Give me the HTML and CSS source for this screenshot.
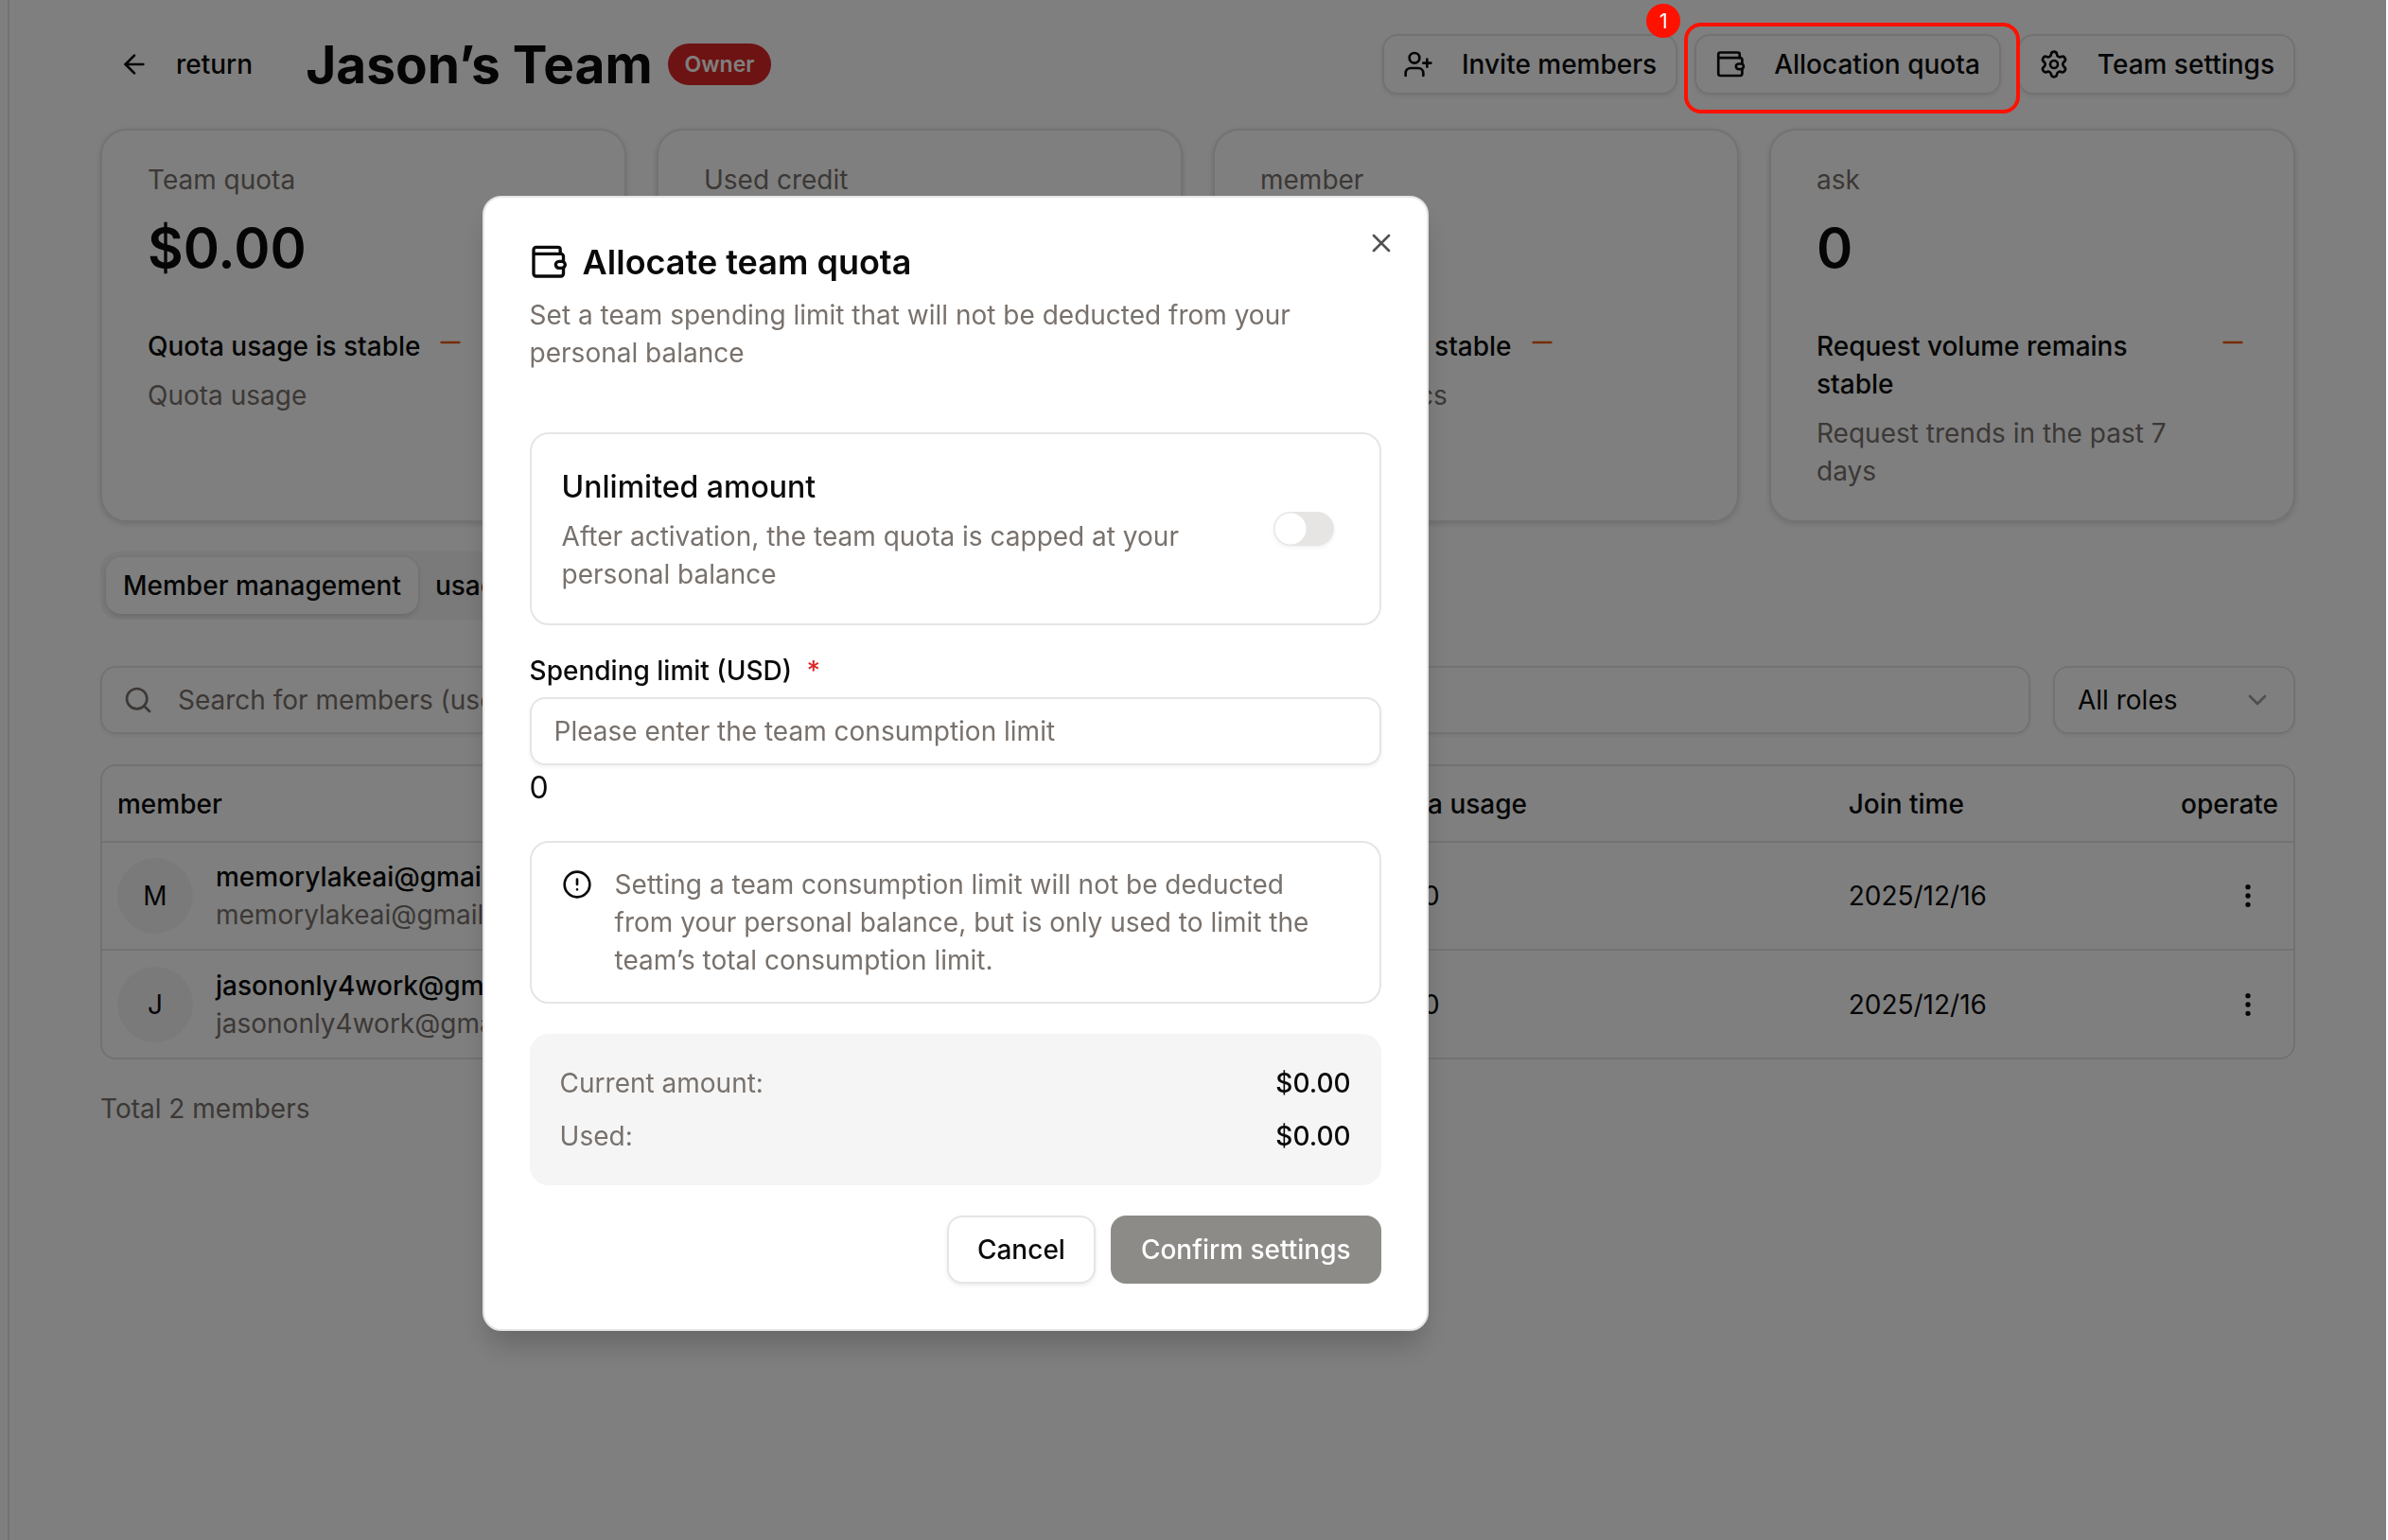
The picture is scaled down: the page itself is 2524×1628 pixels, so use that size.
FILE: index.html
```html
<!DOCTYPE html>
<html lang="en">
<head>
    <meta charset="UTF-8">
    <meta name="viewport" content="width=device-width, initial-scale=1.0">
    <title>Jason’s Team</title>
    <link rel="stylesheet" href="styles.css">
</head>
<body>

    <!-- shared icons -->
    <svg class="sprite" aria-hidden="true">
        <symbol id="icon-wallet" viewBox="0 0 24 24">
            <path d="M19.3 6.8V4a1.4 1.4 0 0 0-1.4-1.4H4A1.6 1.6 0 0 0 2.4 4.2v15.2A1.6 1.6 0 0 0 4 21h15.7a1.6 1.6 0 0 0 1.6-1.6V16"/>
            <path d="M2.6 6.8h17.1a1.6 1.6 0 0 1 1.6 1.6v3"/>
            <rect x="16.4" y="11.6" width="6" height="4.2" rx="2.1"/>
        </symbol>
        <symbol id="icon-dots" viewBox="0 0 24 24">
            <circle cx="12" cy="12" r="1"/><circle cx="12" cy="5" r="1"/><circle cx="12" cy="19" r="1"/>
        </symbol>
        <symbol id="icon-minus" viewBox="0 0 24 24">
            <path d="M5 12h14"/>
        </symbol>
    </svg>

    <div class="page">
        <main class="content">
            <header class="header">
                <a class="back" href="#">
                    <svg class="icon" viewBox="0 0 24 24"><path d="m12 19-7-7 7-7"/><path d="M19 12H5"/></svg>
                    return
                </a>
                <h1>Jason’s Team</h1>
                <span class="badge">Owner</span>
                <div class="actions">
                    <button class="btn btn-small">
                        <svg class="icon" viewBox="0 0 24 24"><path d="M16 21v-2a4 4 0 0 0-4-4H6a4 4 0 0 0-4 4v2"/><circle cx="9" cy="7" r="4"/><path d="M19 8v6M22 11h-6"/></svg>
                        Invite members
                    </button>
                    <div class="marked">
                        <button class="btn btn-small">
                            <svg class="icon"><use href="#icon-wallet"/></svg>
                            Allocation quota
                        </button>
                        <div class="marker"><span class="marker-number">1</span></div>
                    </div>
                    <button class="btn btn-small">
                        <svg class="icon" viewBox="0 0 24 24"><path d="M9.671 4.136a2.34 2.34 0 0 1 4.659 0 2.34 2.34 0 0 0 3.319 1.915 2.34 2.34 0 0 1 2.33 4.033 2.34 2.34 0 0 0 0 3.831 2.34 2.34 0 0 1-2.33 4.033 2.34 2.34 0 0 0-3.319 1.915 2.34 2.34 0 0 1-4.659 0 2.34 2.34 0 0 0-3.32-1.915 2.34 2.34 0 0 1-2.33-4.033 2.34 2.34 0 0 0 0-3.831A2.34 2.34 0 0 1 6.35 6.051a2.34 2.34 0 0 0 3.319-1.915"/><circle cx="12" cy="12" r="3"/></svg>
                        Team settings
                    </button>
                </div>
            </header>

            <section class="cards">
                <div class="card">
                    <p class="muted">Team quota</p>
                    <p class="value">$0.00</p>
                    <div class="trend"><span>Quota usage is stable</span><svg class="icon trend-icon"><use href="#icon-minus"/></svg></div>
                    <p class="muted note">Quota usage</p>
                </div>
                <div class="card">
                    <p class="muted">Used credit</p>
                    <p class="value">$0.00</p>
                    <div class="trend"><span>Usage is stable</span><svg class="icon trend-icon"><use href="#icon-minus"/></svg></div>
                    <p class="muted note">Used credit</p>
                </div>
                <div class="card">
                    <p class="muted">member</p>
                    <p class="value">2</p>
                    <div class="trend"><span>Members are stable</span><svg class="icon trend-icon"><use href="#icon-minus"/></svg></div>
                    <p class="muted note">Team statistics</p>
                </div>
                <div class="card">
                    <p class="muted">ask</p>
                    <p class="value">0</p>
                    <div class="trend"><span>Request volume remains stable</span><svg class="icon trend-icon"><use href="#icon-minus"/></svg></div>
                    <p class="muted note">Request trends in the past 7 days</p>
                </div>
            </section>

            <nav class="tabs">
                <button class="tab active">Member management</button>
                <button class="tab">usage</button>
            </nav>

            <div class="filters">
                <label class="search">
                    <svg class="icon" viewBox="0 0 24 24"><circle cx="11" cy="11" r="8"/><path d="m21 21-4.3-4.3"/></svg>
                    <input type="text" placeholder="Search for members (username)" aria-label="Search for members">
                </label>
                <div class="select">
                    <select aria-label="Role">
                        <option>All roles</option>
                    </select>
                    <svg class="icon" viewBox="0 0 24 24"><path d="m6 9 6 6 6-6"/></svg>
                </div>
            </div>

            <div class="table-wrap">
                <table>
                    <thead>
                        <tr>
                            <th class="col-member">member</th>
                            <th>Quota usage</th>
                            <th class="col-time">Join time</th>
                            <th class="col-operate">operate</th>
                        </tr>
                    </thead>
                    <tbody>
                        <tr>
                            <td>
                                <div class="member">
                                    <span class="avatar">M</span>
                                    <div><strong>memorylakeai@gmail.com</strong><p class="muted">memorylakeai@gmail.com</p></div>
                                </div>
                            </td>
                            <td>$0.00</td>
                            <td>2025/12/16</td>
                            <td class="col-operate"><button class="more" aria-label="More"><svg class="icon"><use href="#icon-dots"/></svg></button></td>
                        </tr>
                        <tr>
                            <td>
                                <div class="member">
                                    <span class="avatar">J</span>
                                    <div><strong>jasononly4work@gmail.com</strong><p class="muted">jasononly4work@gmail.com</p></div>
                                </div>
                            </td>
                            <td>$0.00</td>
                            <td>2025/12/16</td>
                            <td class="col-operate"><button class="more" aria-label="More"><svg class="icon"><use href="#icon-dots"/></svg></button></td>
                        </tr>
                    </tbody>
                </table>
            </div>

            <p class="muted">Total 2 members</p>
        </main>
    </div>

    <div class="overlay">
        <div class="modal" role="dialog" aria-labelledby="modal-title">
            <button class="close" aria-label="Close">
                <svg class="icon" viewBox="0 0 24 24"><path d="M18 6 6 18M6 6l12 12"/></svg>
            </button>
            <div class="modal-head">
                <h2 id="modal-title"><svg class="icon"><use href="#icon-wallet"/></svg>Allocate team quota</h2>
                <p class="muted">Set a team spending limit that will not be deducted from your personal balance</p>
            </div>

            <div class="box unlimited">
                <div>
                    <label class="box-title" for="unlimited">Unlimited amount</label>
                    <p class="muted">After activation, the team quota is capped at your personal balance</p>
                </div>
                <input class="switch" type="checkbox" id="unlimited">
            </div>

            <div class="field">
                <label for="limit">Spending limit (USD) <span class="required">*</span></label>
                <input type="text" id="limit" placeholder="Please enter the team consumption limit">
                <p class="amount">0</p>
            </div>

            <div class="box notice">
                <svg class="icon" viewBox="0 0 24 24"><circle cx="12" cy="12" r="10"/><path d="M12 8v4M12 16h.01"/></svg>
                <p class="muted">Setting a team consumption limit will not be deducted from your personal balance, but is only used to limit the team’s total consumption limit.</p>
            </div>

            <dl class="summary">
                <div><dt>Current amount:</dt><dd>$0.00</dd></div>
                <div><dt>Used:</dt><dd>$0.00</dd></div>
            </dl>

            <div class="modal-foot">
                <button class="btn">Cancel</button>
                <button class="btn btn-primary" disabled>Confirm settings</button>
            </div>
        </div>
    </div>

</body>
</html>
```

FILE: styles.css
```css
* {
    box-sizing: border-box;
    margin: 0;
    padding: 0;
}
body {
    font-family: Inter, "Liberation Sans", sans-serif;
    font-size: 28px;
    line-height: 40px;
    color: #0a0a0a;
    background: #fff;
}
button, input, select {
    font: inherit;
    color: inherit;
    background: none;
    border: none;
}
a {
    color: inherit;
    text-decoration: none;
}
.sprite {
    position: absolute;
    width: 0;
    height: 0;
}
.icon {
    width: 32px;
    height: 32px;
    flex-shrink: 0;
    fill: none;
    stroke: currentColor;
    stroke-width: 2;
    stroke-linecap: round;
    stroke-linejoin: round;
}
.muted {
    color: #78716c;
}

/* page */
.page {
    min-height: 100vh;
    padding-left: 8px;
}
.content {
    min-height: 100vh;
    padding: 36px 98px 36px 96px;
    background: #fff;
    border-left: 2px solid #e5e5e5;
}
.header {
    display: flex;
    align-items: center;
    gap: 16px;
    height: 64px;
    margin-bottom: 36px;
}
.back {
    display: flex;
    align-items: center;
    gap: 28px;
    padding: 0 40px 0 20px;
    font-weight: 500;
}
h1 {
    font-size: 55px;
    line-height: 64px;
    font-weight: 700;
}
.badge {
    padding: 2px 18px;
    border-radius: 22px;
    font-size: 23px;
    font-weight: 600;
    color: #fff;
    background: #dc2626;
}
.actions {
    display: flex;
    gap: 18px;
    margin-left: auto;
}
.btn {
    display: flex;
    align-items: center;
    height: 72px;
    padding: 0 30px;
    border: 2px solid #e5e5e5;
    border-radius: 16px;
    font-weight: 500;
    background: #fff;
    box-shadow: 0 2px 4px rgba(0, 0, 0, 0.08);
}
.btn-small {
    height: 64px;
    gap: 30px;
    padding: 0 20px;
}
.btn-primary {
    color: #fff;
    background: #8c8b88;
    border-color: #8c8b88;
    box-shadow: none;
}

/* red frame over the quota button */
.marked {
    position: relative;
}
.marker {
    position: absolute;
    inset: -12px -20px -20px -11px;
    z-index: 20;
    border: 4px solid #ff1100;
    border-radius: 18px;
}
.marker-number {
    position: absolute;
    top: -24px;
    left: -44px;
    width: 36px;
    height: 36px;
    border-radius: 50%;
    font-size: 22px;
    line-height: 36px;
    text-align: center;
    color: #fff;
    background: #ff1100;
}

/* cards */
.cards {
    display: grid;
    grid-template-columns: repeat(4, 1fr);
    gap: 32px;
    margin-bottom: 31px;
}
.card {
    min-height: 416px;
    padding: 32px 48px;
    border: 2px solid #e5e5e5;
    border-radius: 28px;
    box-shadow: 0 2px 6px rgba(0, 0, 0, 0.15);
}
.value {
    margin-bottom: 32px;
    font-size: 58px;
    line-height: 104px;
    font-weight: 600;
}
.trend {
    display: flex;
    gap: 16px;
    margin-bottom: 12px;
    font-weight: 500;
}
.trend-icon {
    color: #ea580c;
}
.note {
    padding-right: 32px;
}

/* tabs and filters */
.tabs {
    display: inline-flex;
    align-items: center;
    height: 72px;
    padding: 6px;
    border-radius: 20px;
    background: #f5f5f5;
    margin-bottom: 49px;
}
.tab {
    height: 60px;
    padding: 0 18px;
    border-radius: 16px;
    font-weight: 500;
}
.tab.active {
    background: #fff;
    box-shadow: 0 2px 6px rgba(0, 0, 0, 0.15);
}
.filters {
    display: flex;
    gap: 24px;
    margin-bottom: 32px;
}
.search, .select select, .field input {
    height: 72px;
    border: 2px solid #e5e5e5;
    border-radius: 16px;
    box-shadow: 0 2px 4px rgba(0, 0, 0, 0.06);
}
.search {
    display: flex;
    flex: 1;
    align-items: center;
    gap: 26px;
    padding: 0 22px;
    color: #78716c;
}
.search input {
    flex: 1;
}
input::placeholder {
    color: #78716c;
    opacity: 1;
}
.select {
    position: relative;
    width: 256px;
}
.select select {
    width: 100%;
    padding: 0 24px;
    appearance: none;
}
.select .icon {
    position: absolute;
    right: 24px;
    top: 20px;
    opacity: 0.4;
    pointer-events: none;
}

/* members table */
.table-wrap {
    border: 2px solid #e5e5e5;
    border-radius: 16px;
    margin-bottom: 32px;
}
table {
    width: 100%;
    border-collapse: collapse;
    table-layout: fixed;
}
th, td {
    padding: 0 16px;
    text-align: left;
}
th {
    height: 80px;
    font-weight: 500;
}
td {
    height: 114px;
}
tbody tr {
    border-top: 2px solid #e5e5e5;
}
.col-member {
    width: 57%;
}
.col-time {
    width: 14%;
}
th.col-operate {
    width: 7%;
}
.member {
    display: flex;
    align-items: center;
    gap: 24px;
}
.member strong {
    font-weight: 500;
}
.avatar {
    display: grid;
    place-items: center;
    width: 80px;
    height: 80px;
    border-radius: 50%;
    background: #f5f5f5;
}
.col-operate {
    text-align: right;
}
.more {
    display: inline-flex;
    padding: 16px;
}

/* dialog */
.overlay {
    position: fixed;
    inset: 0 2px 0 0;
    z-index: 10;
    display: flex;
    align-items: flex-start;
    justify-content: center;
    padding: 207px 20% 0 2px;
    background: rgba(0, 0, 0, 0.5);
}
.modal {
    position: relative;
    display: flex;
    flex-direction: column;
    gap: 32px;
    width: 1000px;
    padding: 48px;
    border: 2px solid #e5e5e5;
    border-radius: 20px;
    background: #fff;
    box-shadow: 0 20px 30px -6px rgba(0, 0, 0, 0.2);
}
.close {
    position: absolute;
    top: 32px;
    right: 32px;
    display: flex;
    opacity: 0.7;
}
.modal-head {
    margin-bottom: 32px;
}
h2 {
    display: flex;
    align-items: center;
    gap: 16px;
    margin-bottom: 16px;
    font-size: 36px;
    line-height: 40px;
    font-weight: 600;
}
h2 .icon {
    width: 40px;
    height: 40px;
}
.box {
    display: flex;
    border: 2px solid #e5e5e5;
    border-radius: 20px;
}
.unlimited {
    align-items: center;
    justify-content: space-between;
    gap: 32px;
    padding: 32px 48px 32px 32px;
}
.box-title {
    display: block;
    margin-bottom: 8px;
    font-size: 32px;
    line-height: 48px;
    font-weight: 500;
}
.switch {
    flex-shrink: 0;
    width: 64px;
    height: 36px;
    border-radius: 18px;
    appearance: none;
    background: radial-gradient(circle at 18px 18px, #fff 16px, #e7e5e4 17px);
    box-shadow: 0 2px 4px rgba(0, 0, 0, 0.06);
}
.switch:checked {
    background: radial-gradient(circle at 46px 18px, #fff 16px, #1c1917 17px);
}
.field label {
    display: block;
    margin-bottom: 12px;
    line-height: 32px;
    font-weight: 500;
}
.required {
    margin-left: 8px;
    color: #dc2626;
}
.field input {
    width: 100%;
    padding: 0 24px;
}
.amount {
    font-size: 32px;
    line-height: 48px;
}
.notice {
    gap: 24px;
    padding: 24px 48px 24px 32px;
}
.notice .icon {
    margin-top: 4px;
}
.summary {
    padding: 32px;
    border-radius: 20px;
    background: #f5f5f5;
}
.summary div {
    display: flex;
    justify-content: space-between;
}
.summary div + div {
    margin-top: 16px;
}
.summary dt {
    color: #78716c;
}
.summary dd {
    font-weight: 500;
}
.modal-foot {
    display: flex;
    justify-content: flex-end;
    gap: 16px;
}
```
